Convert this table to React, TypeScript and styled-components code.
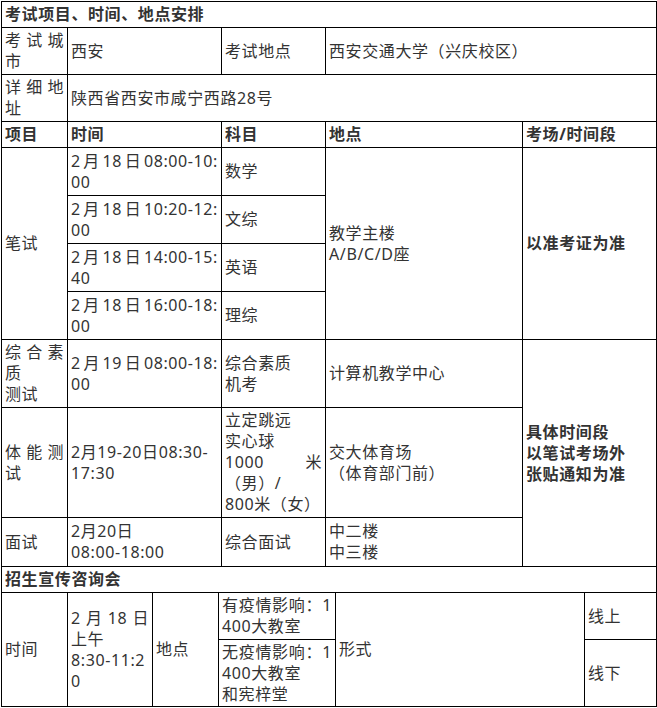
import React from "react";
import styled, { createGlobalStyle } from "styled-components";

const Global = createGlobalStyle`
  body {
    margin: 0;
    padding: 1px 0 0 1px;
    background: #fff;
    font-family: "Noto Sans", "Noto Sans CJK SC", sans-serif;
    font-size: 16px;
    color: #333;
  }
`;

const Table = styled.table`
  width: 655px;
  border-collapse: collapse;
  table-layout: fixed;
  & + & {
    margin-top: -1px;
  }
`;

const Row = styled.tr<{ $h: number }>`
  height: ${(p) => p.$h}px;
`;

const Cell = styled.td<{ $bold?: boolean }>`
  border: 1px solid #000;
  padding: 0 3px;
  vertical-align: middle;
  line-height: 21px;
  letter-spacing: 0.6px;
  font-weight: ${(p) => (p.$bold ? 700 : 400)};
  word-break: break-all;
`;

const Line = styled.span<{ $justify?: boolean }>`
  display: block;
  text-align: ${(p) => (p.$justify ? "justify" : "left")};
  text-align-last: ${(p) => (p.$justify ? "justify" : "auto")};
`;

const examCols = [66, 154, 104, 197, 134];
const talkCols = [66, 85, 66, 117, 249, 72];

type Written = { time: string; tail: string; subject: string };
const written: Written[] = [
  { time: "08:00-10:", tail: "00", subject: "数学" },
  { time: "10:20-12:", tail: "00", subject: "文综" },
  { time: "14:00-15:", tail: "40", subject: "英语" },
  { time: "16:00-18:", tail: "00", subject: "理综" },
];

function ExamTable() {
  return (
    <Table>
      <colgroup>
        {examCols.map((w, i) => (
          <col key={i} style={{ width: w }} />
        ))}
      </colgroup>
      <tbody>
        <Row $h={26}>
          <Cell $bold colSpan={5}>考试项目、时间、地点安排</Cell>
        </Row>
        <Row $h={47}>
          <Cell>
            <Line $justify>考试城</Line>
            <Line>市</Line>
          </Cell>
          <Cell>西安</Cell>
          <Cell>考试地点</Cell>
          <Cell colSpan={2}>西安交通大学（兴庆校区）</Cell>
        </Row>
        <Row $h={47}>
          <Cell>
            <Line $justify>详细地</Line>
            <Line>址</Line>
          </Cell>
          <Cell colSpan={4}>陕西省西安市咸宁西路28号</Cell>
        </Row>
        <Row $h={26}>
          <Cell $bold>项目</Cell>
          <Cell $bold>时间</Cell>
          <Cell $bold>科目</Cell>
          <Cell $bold>地点</Cell>
          <Cell $bold>考场/时间段</Cell>
        </Row>
        {written.map((w, i) => (
          <Row $h={48} key={w.subject}>
            {i === 0 && <Cell rowSpan={4}>笔试</Cell>}
            <Cell>
              <Line $justify>2月18日{w.time}</Line>
              <Line>{w.tail}</Line>
            </Cell>
            <Cell>{w.subject}</Cell>
            {i === 0 && (
              <>
                <Cell rowSpan={4}>
                  <Line>教学主楼</Line>
                  <Line>A/B/C/D座</Line>
                </Cell>
                <Cell $bold rowSpan={4}>以准考证为准</Cell>
              </>
            )}
          </Row>
        ))}
        <Row $h={68}>
          <Cell>
            <Line $justify>综合素</Line>
            <Line>质</Line>
            <Line>测试</Line>
          </Cell>
          <Cell>
            <Line $justify>2月19日08:00-18:</Line>
            <Line>00</Line>
          </Cell>
          <Cell>
            <Line>综合素质</Line>
            <Line>机考</Line>
          </Cell>
          <Cell>计算机教学中心</Cell>
          <Cell $bold rowSpan={3}>
            <Line>具体时间段</Line>
            <Line>以笔试考场外</Line>
            <Line>张贴通知为准</Line>
          </Cell>
        </Row>
        <Row $h={110}>
          <Cell>
            <Line $justify>体能测</Line>
            <Line>试</Line>
          </Cell>
          <Cell>
            <Line>2月19-20日08:30-</Line>
            <Line>17:30</Line>
          </Cell>
          <Cell>
            <Line>立定跳远</Line>
            <Line>实心球</Line>
            <Line $justify>1000 米</Line>
            <Line>（男）/</Line>
            <Line>800米（女）</Line>
          </Cell>
          <Cell>
            <Line>交大体育场</Line>
            <Line>（体育部门前）</Line>
          </Cell>
        </Row>
        <Row $h={49}>
          <Cell>面试</Cell>
          <Cell>
            <Line>2月20日</Line>
            <Line>08:00-18:00</Line>
          </Cell>
          <Cell>综合面试</Cell>
          <Cell>
            <Line>中二楼</Line>
            <Line>中三楼</Line>
          </Cell>
        </Row>
      </tbody>
    </Table>
  );
}

function TalkTable() {
  return (
    <Table>
      <colgroup>
        {talkCols.map((w, i) => (
          <col key={i} style={{ width: w }} />
        ))}
      </colgroup>
      <tbody>
        <Row $h={26}>
          <Cell $bold colSpan={6}>招生宣传咨询会</Cell>
        </Row>
        <Row $h={47}>
          <Cell rowSpan={2}>时间</Cell>
          <Cell rowSpan={2}>
            <Line $justify>2月18日</Line>
            <Line>上午</Line>
            <Line $justify>8:30-11:2</Line>
            <Line>0</Line>
          </Cell>
          <Cell rowSpan={2}>地点</Cell>
          <Cell>
            <Line $justify>有疫情影响：1</Line>
            <Line>400大教室</Line>
          </Cell>
          <Cell rowSpan={2}>形式</Cell>
          <Cell>线上</Cell>
        </Row>
        <Row $h={67}>
          <Cell>
            <Line $justify>无疫情影响：1</Line>
            <Line>400大教室</Line>
            <Line>和宪梓堂</Line>
          </Cell>
          <Cell>线下</Cell>
        </Row>
      </tbody>
    </Table>
  );
}

export default function App() {
  return (
    <>
      <Global />
      <ExamTable />
      <TalkTable />
    </>
  );
}
